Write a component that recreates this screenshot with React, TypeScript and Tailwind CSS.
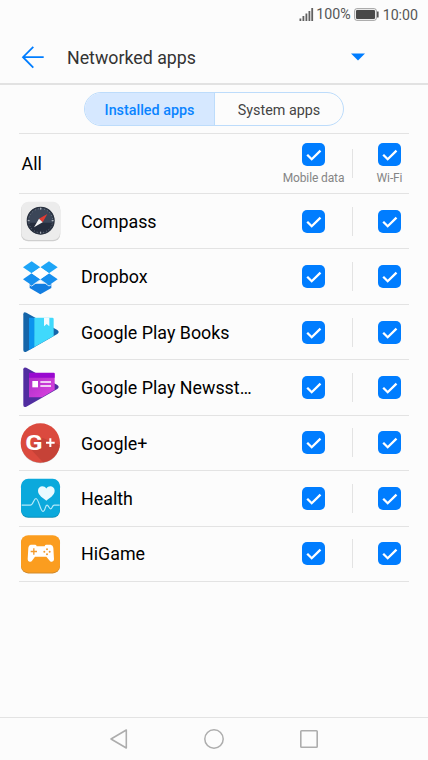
import React from 'react'

const CompassIcon = () => (
  <svg className="h-11 w-11" viewBox="27 13 132 132">
    <rect x="33" y="24" width="118" height="116" rx="22" fill="#cfcfcf" />
    <rect x="34" y="21" width="116" height="115" rx="21" fill="#ececec" />
    <circle cx="92" cy="78" r="41" fill="#3b4658" />
    <path d="M53 84a40 40 0 0 0 78 0z" fill="#252d3d" />
    <circle cx="92" cy="78" r="40" fill="none" stroke="#29313f" strokeWidth="4" />
    <circle cx="92" cy="78" r="36" fill="none" stroke="#8b93a0" strokeWidth="3" strokeDasharray="2 7.420" />
    <path d="M92 39v6M92 111v6M53 78h6M125 78h6" stroke="#b9bec6" strokeWidth="3" />
    <path d="M112 58L98 83L87 72z" fill="#e23b32" />
    <path d="M72 98L98 83L87 72z" fill="#f5f5f5" />
  </svg>
)

const DropboxIcon = () => (
  <svg className="h-11 w-11" viewBox="27 14 132 132">
    <path d="M59 100H124V113L91 132L59 113z" fill="#127de0" />
    <path d="M59 103L65 107L91 89L117 107L124 103" fill="none" stroke="#d9ecfc" strokeWidth="3" />
    <path d="M65 33L91 51L65 69L39 51z" fill="#1ea5f7" />
    <path d="M117 33L143 51L117 69L91 51z" fill="#1ea5f7" />
    <path d="M65 69L91 87L65 105L39 87z" fill="#168fee" />
    <path d="M117 69L143 87L117 105L91 87z" fill="#168fee" />
    <path d="M91 51L117 69L91 87L65 69z" fill="#fff" />
  </svg>
)

const BooksIcon = () => (
  <svg className="h-11 w-11" viewBox="27 15 132 132">
    <path d="M40 28Q40 19 49 23L142 75Q150 81 142 87L49 140Q40 143 40 135z" fill="#1565a9" />
    <path d="M57 38H74V126L57 135z" fill="#0b93ee" />
    <path d="M73 38H127Q131 38 131 42V93L73 126z" fill="#40d9fc" />
    <path d="M102 38H118V64L110 57L102 64z" fill="#f4fbff" />
  </svg>
)

const NewsstandIcon = () => (
  <svg className="h-11 w-11" viewBox="27 16 132 132">
    <defs>
      <linearGradient id="news" x1="0" y1="0" x2="1" y2="1">
        <stop offset="0" stopColor="#ab2cc9" />
        <stop offset="1" stopColor="#dc43df" />
      </linearGradient>
    </defs>
    <path d="M40 29Q40 21 49 24L142 76Q150 82 142 88L49 141Q40 145 40 136z" fill="#512da0" />
    <path d="M57 40H131Q134 40 134 43V90L96 113H57z" fill="url(#news)" />
    <path d="M57 39H131Q134 39 134 43V54H57z" fill="#9909d0" />
    <rect x="67" y="64" width="17" height="19" fill="#fff" />
    <path d="M91 67H123M91 79H123" stroke="#fff" strokeWidth="5" />
  </svg>
)

const GooglePlusIcon = () => (
  <svg className="h-11 w-11" viewBox="27 17 132 132">
    <circle cx="91" cy="86" r="58" fill="#c4c4c4" />
    <circle cx="91" cy="83" r="59" fill="#db4a3e" />
    <path d="M61 100L97 67L149 89A59 59 0 0 1 99 141z" fill="#c64237" />
    <text x="46" y="105" fontSize="62" fontWeight="700" fill="#fff" fontFamily="Roboto, sans-serif" textLength="52" lengthAdjust="spacingAndGlyphs">G</text>
    <path d="M108 82H134M121 69V95" stroke="#fff" strokeWidth="6" />
  </svg>
)

const HealthIcon = () => (
  <svg className="h-11 w-11" viewBox="27 18.5 132 132">
    <rect x="33" y="30" width="117" height="114" rx="22" fill="#0b8fb8" />
    <rect x="33" y="27" width="117" height="114" rx="22" fill="#0ba9dc" />
    <path d="M109 93C101 86 84 77 84 63C84 48 102 45 109 56C116 45 134 48 134 63C134 77 117 86 109 93z" fill="#eafaff" />
    <path d="M35 106H61C70 106 71 86 78 86C86 86 91 125 99 125C106 125 105 106 111 106C116 106 117 117 122 117C127 117 126 106 133 106H149" fill="none" stroke="#b4e9fa" strokeWidth="3.500" />
  </svg>
)

const HiGameIcon = () => (
  <svg className="h-11 w-11" viewBox="27 20.5 132 132">
    <rect x="33" y="33" width="117" height="112" rx="22" fill="#d18a2c" />
    <rect x="33" y="30" width="117" height="112" rx="22" fill="#fb9d1f" />
    <path d="M62 59H75Q79 59 80 63H104Q105 59 109 59H122Q129 60 130 68L132 102Q131 113 121 109L109 95H75L65 108Q54 114 53 102L55 68Q56 60 62 59z" fill="#fff" />
    <path d="M62 79H81M71.500 69.500V88.500" stroke="#f39a2c" strokeWidth="4" />
    <g fill="#f39a2c">
      <circle cx="111" cy="72" r="3" />
      <circle cx="111" cy="87" r="3" />
      <circle cx="103" cy="79.500" r="3" />
      <circle cx="119" cy="79.500" r="3" />
    </g>
  </svg>
)

const apps = [
  { name: "Compass", icon: <CompassIcon /> },
  { name: "Dropbox", icon: <DropboxIcon /> },
  { name: "Google Play Books", icon: <BooksIcon /> },
  { name: "Google Play Newsst…", icon: <NewsstandIcon /> },
  { name: "Google+", icon: <GooglePlusIcon /> },
  { name: "Health", icon: <HealthIcon /> },
  { name: "HiGame", icon: <HiGameIcon /> },
]

const CheckBox = () => (
  <span className="block h-[23px] w-[23px] rounded-[5px] bg-[#007dff]">
    <svg viewBox="0 0 23 23" className="h-full w-full">
      <path d="M5.200 11.700L9.700 16.200L18.500 7.600" fill="none" stroke="#fff" strokeWidth="2.300" />
    </svg>
  </span>
)

const StatusBar = () => (
  <div className="flex h-[28px] items-center justify-end pr-[10px] text-[14.200px] text-[#565656]">
    <svg width="15" height="14" viewBox="0 0 15 14" className="mr-[2px]" fill="#606060">
      <rect x="0.500" y="11.500" width="1.800" height="2.500" />
      <rect x="3.500" y="9" width="1.800" height="5" />
      <rect x="6.500" y="6.500" width="1.800" height="7.500" />
      <rect x="9.500" y="4" width="1.800" height="10" />
      <rect x="12.300" y="1" width="1.800" height="13" />
    </svg>
    <span className="leading-none">100%</span>
    <svg width="25" height="13" viewBox="0 0 25 13" className="ml-[3px] mr-1">
      <rect x="0.700" y="0.700" width="21.600" height="11.600" rx="2" fill="none" stroke="#999" />
      <rect x="2" y="2" width="19" height="9" rx="1" fill="#484848" />
      <rect x="23" y="3.500" width="1.600" height="6" fill="#555" />
    </svg>
    <span className="pt-[2px] leading-none">10:00</span>
  </div>
)

const App = () => {
  return (
    <div className="flex h-[760px] w-[428px] flex-col overflow-hidden bg-[#fcfcfc] font-['Roboto',sans-serif]">
      <StatusBar />
      <header className="flex h-[57px] items-center border-b-2 border-[#e2e2e2] pl-[21px] pr-[63px] pt-[2px]">
        <svg width="24" height="24" viewBox="0 0 24 24" fill="none" stroke="#007dff" strokeWidth="1.800">
          <path d="M12.300 1.800L2 12.200L12.300 22.600M2 12.200H22.700" />
        </svg>
        <h1 className="ml-[22px] flex-1 pt-[2px] text-[17.800px] leading-6 text-[#333]">Networked apps</h1>
        <svg width="14" height="8" viewBox="0 0 14 8">
          <path d="M0 0.500H14L7 7.500z" fill="#007dff" />
        </svg>
      </header>

      <div className="flex h-12 justify-center pt-[7px]">
        <div className="flex h-[34px] w-[260px] overflow-hidden rounded-full border border-[#bddcfb] text-[14.350px]">
          <div className="flex w-[130px] items-center justify-center border-r border-[#bddcfb] bg-[#d6e8ff] pt-[3px] font-medium text-[#0a84ff]">Installed apps</div>
          <div className="flex flex-1 items-center justify-center pt-[3px] text-[#444]">System apps</div>
        </div>
      </div>

      <main className="mx-[19px] flex-1 border-t border-[#e3e3e3]">
        <div className="flex h-[60px] items-center border-b border-[#e3e3e3]">
          <span className="flex-1 pl-[2.500px] pt-[2px] text-[17.850px] text-black">All</span>
          <div className="flex w-[76px] flex-col items-center gap-[5px] pr-[1px] pt-[1px]">
            <CheckBox />
            <span className="whitespace-nowrap text-[12px] leading-[14px] tracking-[-0.120px] text-[#858585]">Mobile data</span>
          </div>
          <div className="h-[29px] w-px bg-[#e3e3e3]" />
          <div className="flex w-[56px] flex-col items-center gap-[5px] pl-[17px] pt-[1px]">
            <CheckBox />
            <span className="text-[12px] leading-[14px] tracking-[-0.120px] text-[#858585]">Wi-Fi</span>
          </div>
        </div>
        {apps.map((app) => (
          <div key={app.name} className="flex h-[55.430px] items-center border-b border-[#e3e3e3]">
            {app.icon}
            <span className="ml-[18px] flex-1 whitespace-nowrap pt-[2px] text-[17.850px] text-black">{app.name}</span>
            <div className="flex w-[76px] justify-center pr-[1px]"><CheckBox /></div>
            <div className="h-[29px] w-px bg-[#e3e3e3]" />
            <div className="flex w-[56px] justify-center pl-[17px]"><CheckBox /></div>
          </div>
        ))}
      </main>

      <nav className="flex h-[43px] items-center justify-center gap-[75px] border-t border-[#e3e3e3]">
        <svg width="20" height="22" viewBox="0 0 20 22" fill="none" stroke="#adadad" strokeWidth="1.600" strokeLinejoin="round">
          <path d="M17.300 2V20L2 11z" />
        </svg>
        <svg width="20" height="20" viewBox="0 0 20 20" fill="none" stroke="#adadad" strokeWidth="1.500">
          <circle cx="10" cy="10" r="9.200" />
        </svg>
        <svg width="20" height="20" viewBox="0 0 20 20" fill="none" stroke="#adadad" strokeWidth="1.600">
          <rect x="1.800" y="1.800" width="16.400" height="16.400" rx="0.800" />
        </svg>
      </nav>
    </div>
  )
}

export default App
